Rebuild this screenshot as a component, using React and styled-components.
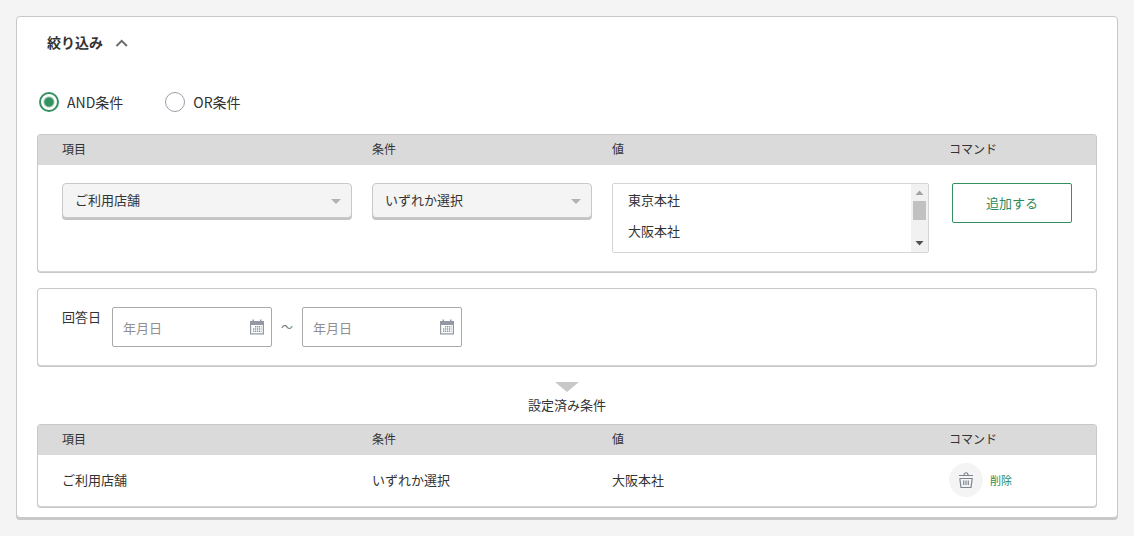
import React, { useState } from "react";
import styled, { createGlobalStyle } from "styled-components";

const GlobalStyle = createGlobalStyle`
  * { box-sizing: border-box; }
  body {
    margin: 0;
    background: #f4f4f4;
    color: #333;
    font-family: "Noto Sans CJK JP", "Noto Sans", sans-serif;
    font-size: 13px;
    line-height: 20px;
  }
  button, input, select { font: inherit; color: inherit; }
`;

const Page = styled.main`
  padding: 16px;
`;

const Card = styled.section`
  padding: 15px 20px 10px;
  background: #fff;
  border: 1px solid #c8c8c8;
  border-radius: 4px;
  box-shadow: 0 2px 0 #c8c8c8;
  margin-bottom: 2px;
`;

const Heading = styled.h1`
  margin: 0;
  font-size: 14px;
  line-height: 20px;
`;

const Toggle = styled.button`
  display: flex;
  align-items: center;
  gap: 12px;
  padding: 0 10px;
  border: 0;
  background: none;
  font-weight: 700;
  cursor: pointer;
`;

const ModeGroup = styled.div`
  display: flex;
  gap: 42px;
  padding: 40px 2px 22px;
`;

const RadioLabel = styled.label`
  display: flex;
  align-items: center;
  gap: 8px;
  font-size: 14px;
  cursor: pointer;
`;

const Radio = styled.input`
  appearance: none;
  width: 20px;
  height: 20px;
  margin: 0;
  border: 1px solid #9a9fa8;
  border-radius: 50%;
  background: #fff;
  &:checked {
    border: 2px solid #339160;
    background: radial-gradient(circle, #339160 4px, #fff 6px);
  }
`;

const Panel = styled.div`
  border: 1px solid #c8c8c8;
  border-bottom-color: #d4d4d4;
  border-radius: 4px;
  box-shadow: 0 1px 0 #c8c8c8;
  background: #fff;
  overflow: hidden;
`;

const Table = styled.table`
  width: 100%;
  table-layout: fixed;
  border-collapse: collapse;
`;

const Col = styled.col`
  width: ${(p) => p.$width};
`;

const HeadCell = styled.th`
  height: 30px;
  padding: 0 0 2px;
  background: #dadada;
  font-size: 12px;
  font-weight: 400;
  text-align: left;
  &:first-child { padding-left: 24px; }
`;

const Cell = styled.td`
  padding: ${(p) => (p.$form ? "18px 20px 18px 0" : "8px 0 9px")};
  vertical-align: ${(p) => (p.$form ? "top" : "middle")};
  &:first-child { padding-left: 24px; }
  &:last-child { padding-right: 0; }
`;

const SelectBox = styled.div`
  display: flex;
  position: relative;
`;

const Select = styled.select`
  appearance: none;
  width: 100%;
  height: 35px;
  padding: 0 32px 2px 12px;
  border: 1px solid #c8c8c8;
  border-radius: 4px;
  box-shadow: 0 2px 0 #c4c4c4;
  background: #f4f4f4;
`;

const SelectArrow = styled.svg`
  position: absolute;
  right: 11px;
  top: 16px;
  pointer-events: none;
`;

const ListBox = styled.div`
  display: flex;
  height: 70px;
  border: 1px solid #d4d4d4;
  border-radius: 2px;
`;

const MultiSelect = styled.select`
  flex: 1;
  min-width: 0;
  padding: 1px 0;
  border: 0;
  background: #fff;
  overflow: hidden;
  option {
    padding: 5px 15px 6px;
    min-height: 31px;
    line-height: 20px;
  }
`;

const ScrollTrack = styled.div`
  display: flex;
  flex-direction: column;
  align-items: center;
  justify-content: space-between;
  width: 17px;
  background: #f1f1f1;
`;

const ScrollThumb = styled.div`
  width: 13px;
  height: 19px;
  margin-bottom: 15px;
  background: #c1c1c1;
`;

const AddButton = styled.button`
  display: block;
  width: 120px;
  height: 40px;
  margin-left: 3px;
  padding: 0;
  border: 1px solid #339160;
  border-radius: 2px;
  background: #fff;
  color: #2c8a5a;
  cursor: pointer;
`;

const DateRow = styled.div`
  display: flex;
  gap: 10px;
  padding: 18px 24px;
`;

const DateLabel = styled.label`
  padding-right: 1px;
`;

const Tilde = styled.span`
  width: 10px;
  display: flex;
  align-items: center;
  justify-content: center;
  color: #777;
  font-size: 12px;
`;

const DateBox = styled.div`
  display: flex;
  align-items: center;
  width: 160px;
  height: 40px;
  padding: 0 7px 0 10px;
  border: 1px solid #aaa;
  border-radius: 2px;
`;

const DateInput = styled.input`
  flex: 1;
  min-width: 0;
  height: 100%;
  padding: 0;
  border: 0;
  outline: 0;
  background: none;
  &::placeholder { color: #8f8f8f; opacity: 1; }
`;

const Divider = styled.div`
  display: flex;
  flex-direction: column;
  align-items: center;
  gap: 3px;
  padding: 0 0 9px;
`;

const Caption = styled.h2`
  margin: 0;
  font-size: 13px;
  font-weight: 400;
  line-height: 20px;
`;

const Sections = styled.div`
  display: flex;
  flex-direction: column;
  gap: 16px;
`;

const DeleteButton = styled.button`
  display: flex;
  align-items: center;
  gap: 7px;
  padding: 0;
  border: 0;
  background: none;
  color: #2c8a5a;
  font-size: 11px;
  cursor: pointer;
`;

const IconCircle = styled.span`
  display: flex;
  align-items: center;
  justify-content: center;
  width: 34px;
  height: 34px;
  border-radius: 50%;
  background: #f4f4f4;
`;

const ChevronUp = () => (
  <svg width="14" height="12" viewBox="0 0 14 12" fill="none" stroke="#6c6c6c" strokeWidth="2" aria-hidden="true">
    <path d="M1.500 10 L6.700 4.800 L11.900 10" />
  </svg>
);

const Triangle = ({ width, height, fill }) => (
  <svg width={width} height={height} viewBox="0 0 10 10" preserveAspectRatio="none" aria-hidden="true">
    <path d="M0 0 H10 L5 10 Z" fill={fill} />
  </svg>
);

const ScrollArrow = ({ up }) => (
  <svg width="17" height="17" viewBox="0 0 17 17" aria-hidden="true">
    <path d={up ? "M4.500 11 L8.500 6.500 L12.500 11 Z" : "M4.500 6 H12.500 L8.500 10.500 Z"} fill={up ? "#a3a3a3" : "#505050"} />
  </svg>
);

const CalendarIcon = () => (
  <svg width="14" height="16" viewBox="0 0 14 16" aria-hidden="true">
    <path d="M0 2 H14 V15.500 H0 Z M1.200 6 V14.300 H12.800 V6 Z" fillRule="evenodd" fill="#9299a3" />
    <path d="M2.500 0.500 h1.500 v2 h-1.500 z M10 0.500 h1.500 v2 h-1.500 z" fill="#9299a3" />
    <path d="M5 7.800 h6.500 M3 10 h8.500 M3 12.200 h8.500" stroke="#8d949e" strokeWidth="1.500" strokeDasharray="1.300 .7" />
  </svg>
);

const TrashIcon = () => (
  <svg width="14" height="18" viewBox="0 0 14 18" fill="none" stroke="#7f8590" strokeWidth="1.200" aria-hidden="true">
    <path d="M0 4.500 H14 M5 4 C5 1 9 1 9 4 M0.800 7.500 H13.200 L12 16.500 H2 L0.800 7.500" />
    <path d="M4.700 9.500 V14 M7 9.500 V14 M9.300 9.500 V14" />
  </svg>
);

const Columns = () => (
  <>
    <colgroup>
      <Col $width="334px" />
      <Col $width="240px" />
      <Col $width="auto" />
      <Col $width="147px" />
    </colgroup>
    <thead>
      <tr>
        {["項目", "条件", "値", "コマンド"].map((t) => (
          <HeadCell key={t} scope="col">{t}</HeadCell>
        ))}
      </tr>
    </thead>
  </>
);

const Dropdown = ({ label, value }) => (
  <SelectBox>
    <Select aria-label={label} defaultValue={value}>
      <option>{value}</option>
    </Select>
    <SelectArrow width="10" height="5" viewBox="0 0 10 5" aria-hidden="true">
      <path d="M0 0 H10 L5 5 Z" fill="#b4b4b4" />
    </SelectArrow>
  </SelectBox>
);

const DateField = ({ id, label }) => (
  <DateBox>
    <DateInput id={id} type="text" placeholder="年月日" aria-label={label} />
    <CalendarIcon />
  </DateBox>
);

export default function App() {
  const [open, setOpen] = useState(true);
  return (
    <Page>
      <GlobalStyle />
      <Card>
        <Heading>
          <Toggle type="button" aria-expanded={open} onClick={() => setOpen(!open)}>
            絞り込み
            <ChevronUp />
          </Toggle>
        </Heading>
        {open && (
          <>
            <ModeGroup role="radiogroup">
              <RadioLabel><Radio type="radio" name="mode" defaultChecked />AND条件</RadioLabel>
              <RadioLabel><Radio type="radio" name="mode" />OR条件</RadioLabel>
            </ModeGroup>
            <Sections>
              <Panel>
                <Table>
                  <Columns />
                  <tbody>
                    <tr>
                      <Cell $form><Dropdown label="項目" value="ご利用店舗" /></Cell>
                      <Cell $form><Dropdown label="条件" value="いずれか選択" /></Cell>
                      <Cell $form>
                        <ListBox>
                          <MultiSelect multiple size={2} aria-label="値">
                            <option>東京本社</option>
                            <option>大阪本社</option>
                          </MultiSelect>
                          <ScrollTrack aria-hidden="true">
                            <ScrollArrow up />
                            <ScrollThumb />
                            <ScrollArrow />
                          </ScrollTrack>
                        </ListBox>
                      </Cell>
                      <Cell $form><AddButton type="button">追加する</AddButton></Cell>
                    </tr>
                  </tbody>
                </Table>
              </Panel>
              <Panel>
                <DateRow>
                  <DateLabel htmlFor="date-from">回答日</DateLabel>
                  <DateField id="date-from" />
                  <Tilde>～</Tilde>
                  <DateField id="date-to" label="回答日（終了）" />
                </DateRow>
              </Panel>
              <Divider>
                <Triangle width="24" height="10" fill="#c8c8c8" />
                <Caption>設定済み条件</Caption>
              </Divider>
            </Sections>
            <Panel>
              <Table>
                <Columns />
                <tbody>
                  <tr>
                    <Cell>ご利用店舗</Cell>
                    <Cell>いずれか選択</Cell>
                    <Cell>大阪本社</Cell>
                    <Cell>
                      <DeleteButton type="button">
                        <IconCircle><TrashIcon /></IconCircle>
                        削除
                      </DeleteButton>
                    </Cell>
                  </tr>
                </tbody>
              </Table>
            </Panel>
          </>
        )}
      </Card>
    </Page>
  );
}
